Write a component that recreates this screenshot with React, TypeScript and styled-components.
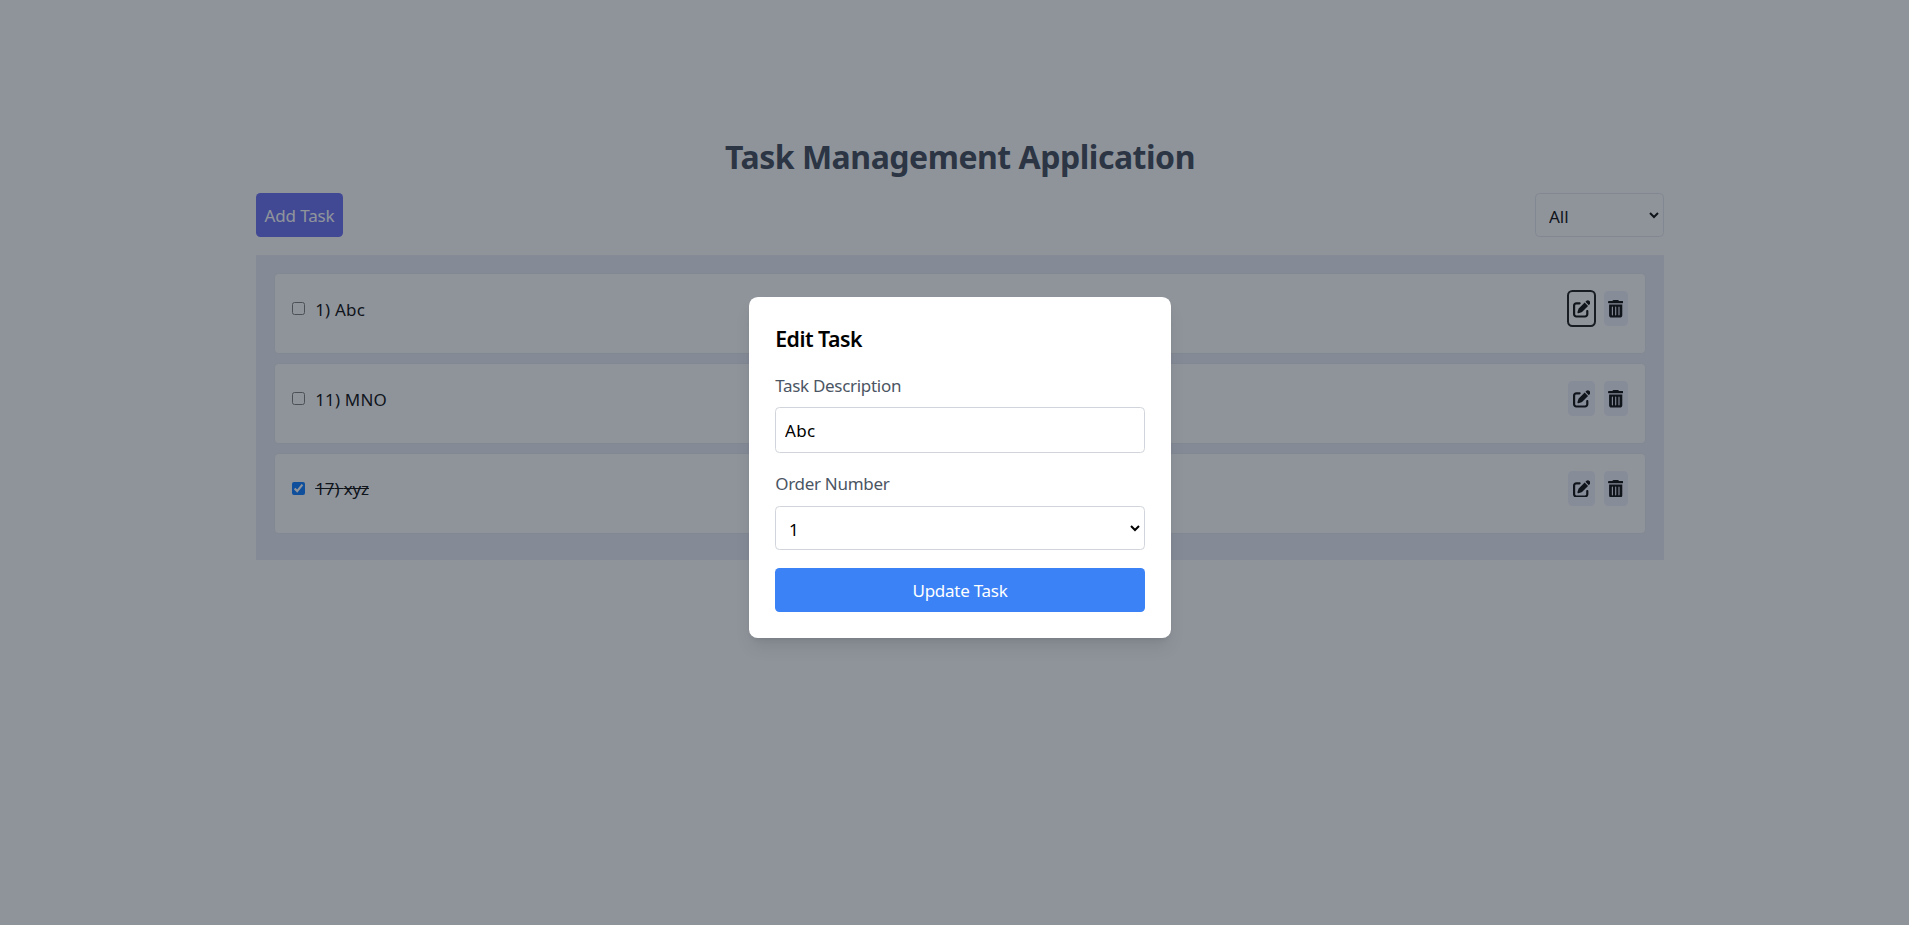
import React from "react";
import styled, { createGlobalStyle, css } from "styled-components";
import { FaPenToSquare, FaTrashCan } from "react-icons/fa6";

const GlobalStyle = createGlobalStyle`
  *, *::before, *::after { box-sizing: border-box; }
  html { font-size: 17.6px; }
  body {
    margin: 0;
    overflow: hidden;
    background: #fff;
    color: #000;
    font-family: "Noto Sans", "Open Sans", sans-serif;
    font-size: 17px;
    line-height: 26.4px;
  }
  h1, h2 { margin: 0; }
  button, input, select { font: inherit; color: inherit; margin: 0; }
`;

const Page = styled.div`
  position: relative;
  width: 1920px;
  height: 935px;
  padding-top: 136.8px;
`;

const Container = styled.main`
  width: 80rem;
  margin: 0 auto;
`;

const Title = styled.h1`
  margin-bottom: 16.6px;
  color: #374151;
  font-size: 32px;
  line-height: 39.6px;
  font-weight: 700;
  text-align: center;
  letter-spacing: -0.48px;
`;

const Toolbar = styled.div`
  display: flex;
  justify-content: space-between;
  align-items: flex-start;
  height: 44.4px;
  margin-bottom: 1rem;
`;

const AddButton = styled.button`
  width: 87px;
  height: 44px;
  padding: 2px 0 0;
  border: 0;
  border-radius: 4.4px;
  background: #6366f1;
  color: #fff;
  letter-spacing: -0.12px;
  white-space: nowrap;
`;

const Select = styled.select<{ $width: string; $border: string }>`
  display: block;
  zoom: 1.1;
  width: ${(p) => p.$width};
  height: 40.4px;
  padding: 9px 8px 7px;
  border: 1px solid ${(p) => p.$border};
  border-radius: 4px;
  background: #fff;
  color: #000;
  font-size: 15.5px;
`;

const List = styled.section`
  padding: 1rem;
  background: #e8ebf5;
`;

const Card = styled.article`
  margin-bottom: 0.5rem;
  padding: 1rem;
  border: 1px solid #e5e7eb;
  border-radius: 4.4px;
  background: #fff;
`;

const Row = styled.div`
  display: flex;
  align-items: center;
  justify-content: space-between;
  height: 35.2px;
  margin-bottom: 0.5rem;
`;

const TaskLabel = styled.label<{ $done: boolean }>`
  display: flex;
  align-items: center;
  gap: 10px;
  letter-spacing: ${(p) => (p.$done ? "-0.12px" : "0.17px")};
  span {
    padding-top: 2px;
    ${(p) => p.$done && css`text-decoration: line-through;`}
  }
`;

const Checkbox = styled.input`
  width: 13.4px;
  height: 13.4px;
  margin: 0 0 0.4px -0.4px;
`;

const Actions = styled.div`
  display: flex;
  gap: 0.5rem;
`;

const IconButton = styled.button<{ $glyph: number; $focused?: boolean }>`
  display: flex;
  align-items: center;
  justify-content: center;
  width: ${(p) => p.$glyph + 0.5}rem;
  height: 35.2px;
  padding: 0.25rem;
  border: 0;
  border-radius: 4.4px;
  background: ${(p) => (p.$focused ? "#fff" : "#eeeffa")};
  outline: ${(p) => (p.$focused ? "2px solid #101010" : "none")};
  outline-offset: -1px;
  color: #000;
  svg { display: block; flex: none; width: ${(p) => p.$glyph}rem; height: 1rem; }
`;

const Overlay = styled.div`
  position: absolute;
  inset: 0;
  display: flex;
  align-items: center;
  justify-content: center;
  background: rgba(31, 41, 55, 0.5);
`;

const Dialog = styled.form`
  width: 24rem;
  padding: 1.5rem;
  border-radius: 8.8px;
  background: #fff;
  box-shadow: 0 11px 16.5px -3.3px rgba(0, 0, 0, 0.1), 0 4.4px 6.6px -4.4px rgba(0, 0, 0, 0.1);
`;

const DialogTitle = styled.h2`
  margin-bottom: 16.6px;
  padding-top: 1px;
  font-size: 21.3px;
  line-height: 30.8px;
  font-weight: 600;
  letter-spacing: -0.5px;
`;

const Field = styled.div`
  margin-bottom: 1rem;
`;

const FieldLabel = styled.label`
  display: block;
  padding-top: 1px;
  margin-bottom: 7.8px;
  color: #4b5563;
  letter-spacing: -0.3px;
`;

const Input = styled.input`
  display: block;
  width: 100%;
  height: 46px;
  padding: 10px 0.5rem 8px;
  border: 1px solid #d1d5db;
  border-radius: 4.4px;
  background: #fff;
  letter-spacing: 0.3px;
`;

const SubmitButton = styled.button`
  display: block;
  width: 100%;
  height: 44px;
  padding: 2px 0 0;
  border: 0;
  border-radius: 4.4px;
  background: #3b82f6;
  color: #fff;
  letter-spacing: -0.26px;
`;

const tasks = [
  { order: 1, name: "Abc", done: false },
  { order: 11, name: "MNO", done: false },
  { order: 17, name: "xyz", done: true },
];

export default function App() {
  const editing = tasks[0];
  return (
    <>
      <GlobalStyle />
      <Page>
        <Container>
          <Title>Task Management Application</Title>
          <Toolbar>
            <AddButton>Add Task</AddButton>
            <Select $width="117.2px" $border="#e5e7eb" defaultValue="All">
              <option>All</option>
              <option>Completed</option>
              <option>Pending</option>
            </Select>
          </Toolbar>
          <List>
            {tasks.map((t) => (
              <Card key={t.order}>
                <Row>
                  <TaskLabel $done={t.done}>
                    <Checkbox type="checkbox" defaultChecked={t.done} />
                    <span>{t.order}) {t.name}</span>
                  </TaskLabel>
                  <Actions>
                    <IconButton aria-label="Edit" $glyph={1} $focused={t === editing}>
                      <FaPenToSquare />
                    </IconButton>
                    <IconButton aria-label="Delete" $glyph={0.875}>
                      <FaTrashCan />
                    </IconButton>
                  </Actions>
                </Row>
              </Card>
            ))}
          </List>
        </Container>
        <Overlay>
          <Dialog onSubmit={(e) => e.preventDefault()}>
            <DialogTitle>Edit Task</DialogTitle>
            <Field>
              <FieldLabel>Task Description</FieldLabel>
              <Input defaultValue={editing.name} />
            </Field>
            <Field>
              <FieldLabel>Order Number</FieldLabel>
              <Select $width="100%" $border="#d1d5db" defaultValue="1">
                {tasks.map((t) => (
                  <option key={t.order}>{t.order}</option>
                ))}
              </Select>
            </Field>
            <SubmitButton>Update Task</SubmitButton>
          </Dialog>
        </Overlay>
      </Page>
    </>
  );
}
